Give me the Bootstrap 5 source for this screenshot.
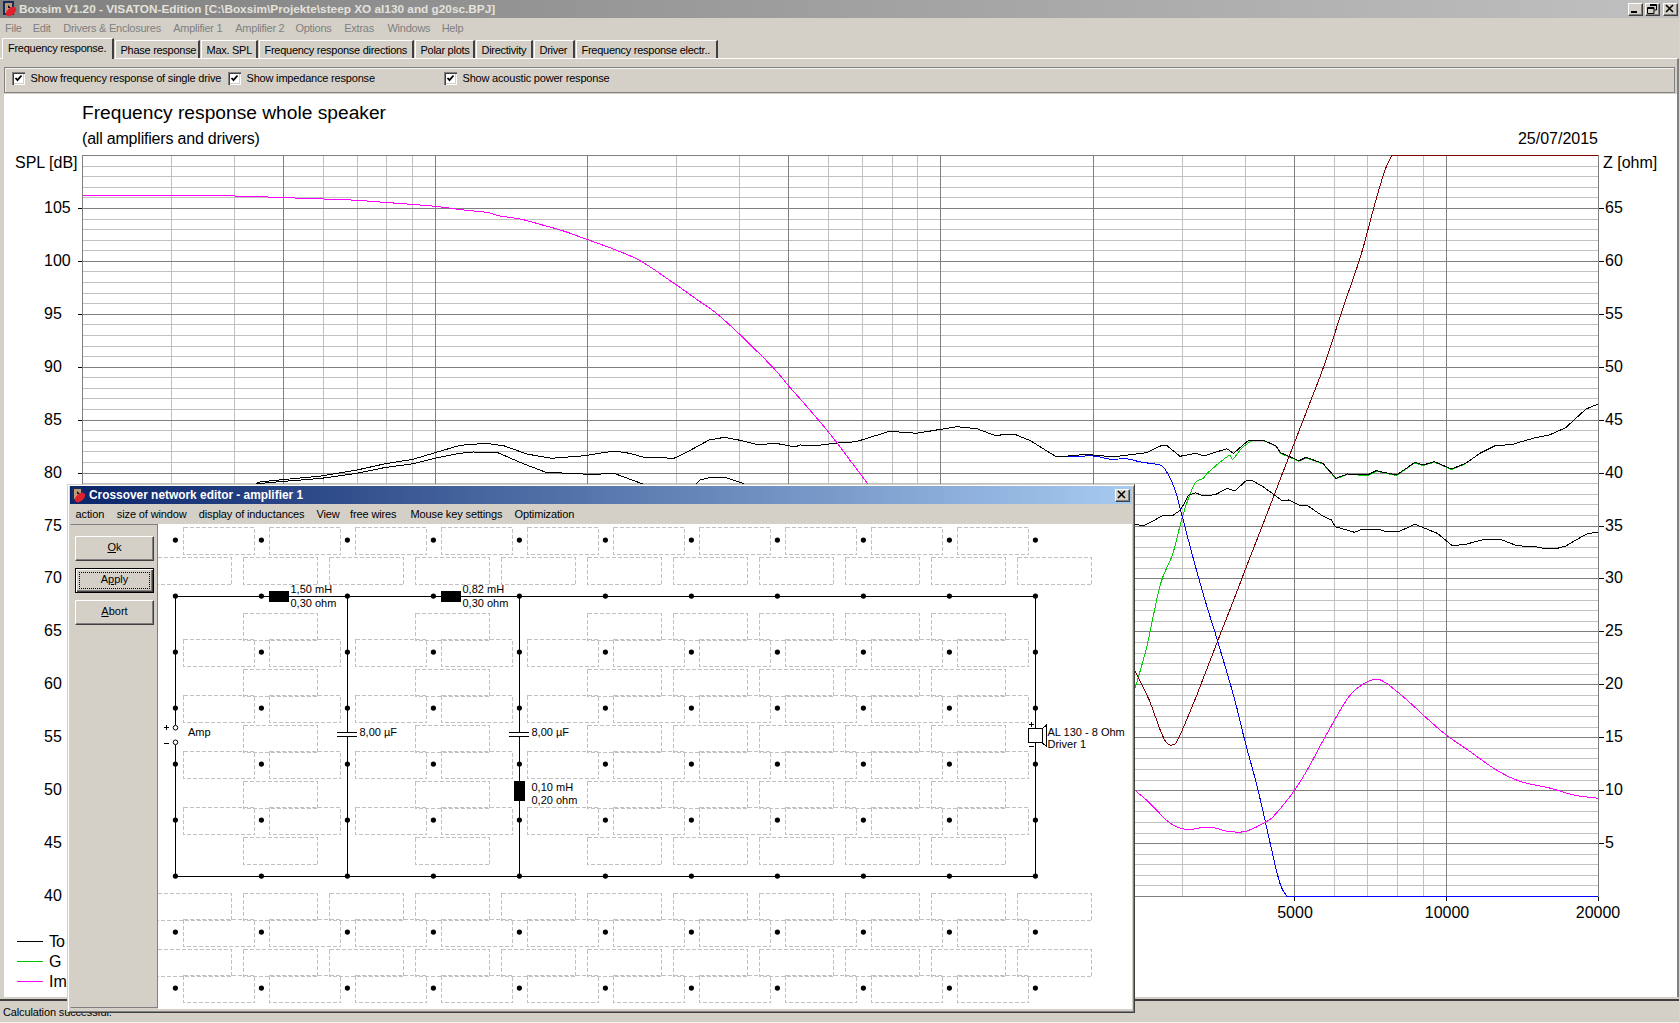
<!DOCTYPE html>
<html lang="en">
<head>
<meta charset="utf-8">
<title>Boxsim</title>
<link href="https://cdn.jsdelivr.net/npm/bootstrap@5.3.0/dist/css/bootstrap.min.css" rel="stylesheet">
<style>
html,body{width:1679px;height:1023px;overflow:hidden}
body{background:#d4d0c8;color:#000;font-family:"Liberation Sans",Arial,sans-serif;font-size:11px;line-height:13px;position:relative}
.app-title{height:18px;background:linear-gradient(90deg,#808080,#c0c0c0);color:#e4e2dc;font-weight:700;font-size:11.8px;padding-left:2px;flex:none}
.app-title svg{margin-right:1px;flex:none}
.cap-btn{width:15px;height:13px;background:#d4d0c8;border:1px solid;border-color:#fff #404040 #404040 #fff;box-shadow:inset -1px -1px #808080;display:flex;align-items:center;justify-content:center;padding:0;flex:none}
.app-caps{margin-right:1px}
.app-caps .cap-btn:nth-child(1){margin-right:2px}.app-caps .cap-btn:nth-child(2){margin-right:3px}
.app-menu{height:20px;padding-left:5px;color:#808080;flex:none;align-items:center;letter-spacing:-.25px}
.app-menu span:nth-child(1){width:27.7px}.app-menu span:nth-child(2){width:30.5px}.app-menu span:nth-child(3){width:110px}
.app-menu span:nth-child(4){width:62.1px}.app-menu span:nth-child(5){width:60.1px}.app-menu span:nth-child(6){width:48.9px}
.app-menu span:nth-child(7){width:43.2px}.app-menu span:nth-child(8){width:54.2px}
.app-tabs{height:20px;flex:none;padding-left:2px;position:relative;z-index:2;flex-wrap:nowrap;letter-spacing:-.27px}
.app-tabs .nav-item{height:18px;margin-top:2px;background:#d4d0c8;border-top:1px solid #fff;border-left:1px solid #fff;border-right:2px solid #404040;white-space:nowrap;padding:3px 0 0 4.500px;margin-right:1px;color:#000}
.app-tabs .nav-item.tab-on{height:21px;margin-top:0;padding:3px 0 0 5px;border-right-color:#404040}
.app-tabs .nav-item:nth-child(1){width:112px}.app-tabs .nav-item:nth-child(2){width:85px}.app-tabs .nav-item:nth-child(3){width:57px}
.app-tabs .nav-item:nth-child(4){width:155px}.app-tabs .nav-item:nth-child(5){width:60px}.app-tabs .nav-item:nth-child(6){width:57px}
.app-tabs .nav-item:nth-child(7){width:41px}.app-tabs .nav-item:nth-child(8){width:142px}
.app-page{border-top:1px solid #fff;border-right:2px solid #808080;padding:8px 0 0 4px;min-height:0;margin-top:0}
.app-opts{height:26px;margin-right:2px;margin-bottom:1px;border:1px solid #808080;box-shadow:inset 1px 1px #f4f3f0;flex:none;padding-left:8px}
.opt-check{display:flex;align-items:center;position:absolute;top:72px;margin:0;letter-spacing:-.19px}
.opt-a{left:12px}.opt-b{left:228px}.opt-c{left:444px}
.opt-check .form-check-input{width:13px;height:13px;margin:0 5.500px 0 0;border:0;border-radius:0;background-color:#fff;box-shadow:inset 1px 1px #808080,inset 2px 2px #404040,inset -1px -1px #fff,inset -2px -2px #d4d0c8;float:none;flex:none;opacity:1;background-size:9px 9px;background-position:center;background-image:url("data:image/svg+xml,%3csvg xmlns='http://www.w3.org/2000/svg' viewBox='0 0 9 9'%3e%3cpath d='M1.5 4l2 2.2L7.5 1.5' fill='none' stroke='%23000' stroke-width='1.8'/%3e%3c/svg%3e")}
.app-plot{background:#fff;min-height:0;flex:1 1 auto;overflow:hidden}
.app-plot svg{display:block}
.plot-t{font-family:"Liberation Sans",Arial,sans-serif;font-size:16px;fill:#000}
.plot-h{font-size:19.2px}
.plot-s{letter-spacing:-.2px}
.plot-l{letter-spacing:-.9px}
.app-status{flex:none;height:24px;margin-top:2px;border-top:2px solid #404040;border-bottom:1px solid #f4f3f0;padding:4px 0 0 3px;font-size:11px;line-height:15px;white-space:nowrap;letter-spacing:-.14px}
.xo-win{left:67px;top:484px;width:1068px;height:529px;background:#d4d0c8;border:1px solid;border-color:#d4d0c8 #404040 #404040 #d4d0c8;box-shadow:inset 1px 1px #fff,inset -1px -1px #808080;padding:1px 2px 3px;z-index:5}
.xo-title{height:18px;background:linear-gradient(90deg,#0a246a,#a6caf0);color:#fff;font-weight:700;font-size:11.9px;flex:none;padding-left:1px}
.xo-title svg{margin-right:2px}
.xo-title .cap-btn{margin-right:2px;margin-left:auto}
.xo-menu{height:20px;flex:none;padding-left:5.5px;align-items:center;letter-spacing:-.12px}
.xo-menu span:nth-child(1){width:41.3px}.xo-menu span:nth-child(2){width:82px}.xo-menu span:nth-child(3){width:117.7px}
.xo-menu span:nth-child(4){width:33.5px}.xo-menu span:nth-child(5){width:60.5px}.xo-menu span:nth-child(6){width:104px}
.xo-body{min-height:0;flex:1 1 auto}
.xo-side{width:88px;flex:none;border:1px solid;border-color:#808080 #808080 #808080 #d4d0c8;padding:11px 0 0 4px;gap:7px;height:484px}
.xo-btn.btn{width:79px;height:25px;padding:0 0 2px;background:#d4d0c8;color:#000;font-size:11px;line-height:13px;border:1px solid;border-color:#fff #404040 #404040 #fff;border-radius:0;box-shadow:inset -1px -1px #808080;display:flex;align-items:center;justify-content:center}
.xo-btn.btn.xo-def{border:1px solid #000;box-shadow:inset 1px 1px #fff,inset -1px -1px #404040,inset -2px -2px #808080;position:relative}
.xo-def::after{content:"";position:absolute;inset:3px;border:1px dotted #000}
.xo-canvas{flex:1 1 auto;background:#fff;min-width:0;overflow:hidden}
.xo-canvas svg{display:block}
.xo-t{font-family:"Liberation Sans",Arial,sans-serif;font-size:11px;fill:#000}
</style>
</head>
<body class="d-flex flex-column m-0">
<header class="app-title d-flex align-items-center">
<svg width="16" height="16" viewBox="0 0 16 16"><rect x="1" y="0" width="11" height="14" fill="#1a2a5a"/><rect x="3" y="2" width="7" height="10" fill="#b89a78"/><path d="M6 4l3 3H6z" fill="#111"/><ellipse cx="9" cy="10.5" rx="6" ry="3.6" transform="rotate(-40 9 10.5)" fill="#e0202c"/></svg>
<span class="flex-grow-1">Boxsim V1.20 - VISATON-Edition [C:\Boxsim\Projekte\steep XO al130 and g20sc.BPJ]</span>
<div class="app-caps d-flex">
<button class="cap-btn" aria-label="Minimize"><svg width="10" height="10" viewBox="0 0 10 10"><rect x="1" y="7" width="6" height="2"/></svg></button>
<button class="cap-btn" aria-label="Restore"><svg width="10" height="10" viewBox="0 0 10 10"><path d="M3 .5h6.5v5.5H7.5M.5 3.5h6.5v6H.5zM.5 4.5h6.5M3 1.5h6.5" fill="none" stroke="#000"/></svg></button>
<button class="cap-btn" aria-label="Close"><svg width="10" height="10" viewBox="0 0 10 10"><path d="M1 1l7 7M8 1L1 8" stroke="#000" stroke-width="1.6" fill="none"/></svg></button>
</div>
</header>
<nav class="app-menu d-flex"><span>File</span><span>Edit</span><span>Drivers &amp; Enclosures</span><span>Amplifier 1</span><span>Amplifier 2</span><span>Options</span><span>Extras</span><span>Windows</span><span>Help</span></nav>
<ul class="nav app-tabs m-0 list-unstyled">
<li class="nav-item tab-on">Frequency response.</li><li class="nav-item">Phase response</li><li class="nav-item">Max. SPL</li><li class="nav-item">Frequency response directions</li><li class="nav-item">Polar plots</li><li class="nav-item">Directivity</li><li class="nav-item">Driver</li><li class="nav-item">Frequency response electr..</li>
</ul>
<main class="app-page flex-grow-1 d-flex flex-column">
<div class="app-opts">
<label class="opt-check opt-a"><input class="form-check-input" type="checkbox" checked>Show frequency response of single drive</label>
<label class="opt-check opt-b"><input class="form-check-input" type="checkbox" checked>Show impedance response</label>
<label class="opt-check opt-c"><input class="form-check-input" type="checkbox" checked>Show acoustic power response</label>
</div>
<div class="app-plot">
<svg id="plot" width="1673" height="902" viewBox="4 94 1673 902">
<g id="grid" shape-rendering="crispEdges"></g>
<g id="curves" fill="none" stroke-width="1" shape-rendering="crispEdges"></g>
<g class="plot-t">
<text class="plot-t plot-h" x="82" y="119">Frequency response whole speaker</text>
<text class="plot-t plot-s" x="82" y="143.500">(all amplifiers and drivers)</text>
<text class="plot-t" x="1598" y="143.500" text-anchor="end">25/07/2015</text>
<text class="plot-t" x="15" y="168">SPL [dB]</text>
<text class="plot-t" x="1603" y="168">Z [ohm]</text>
<text class="plot-t" x="44" y="213">105</text><text class="plot-t" x="44" y="266">100</text><text class="plot-t" x="44" y="319">95</text><text class="plot-t" x="44" y="372">90</text><text class="plot-t" x="44" y="425">85</text><text class="plot-t" x="44" y="478">80</text><text class="plot-t" x="44" y="530.500">75</text><text class="plot-t" x="44" y="583">70</text><text class="plot-t" x="44" y="636">65</text><text class="plot-t" x="44" y="689">60</text><text class="plot-t" x="44" y="742">55</text><text class="plot-t" x="44" y="795">50</text><text class="plot-t" x="44" y="848">45</text><text class="plot-t" x="44" y="901">40</text>
<text class="plot-t" x="1605" y="213">65</text><text class="plot-t" x="1605" y="266">60</text><text class="plot-t" x="1605" y="319">55</text><text class="plot-t" x="1605" y="372">50</text><text class="plot-t" x="1605" y="425">45</text><text class="plot-t" x="1605" y="478">40</text><text class="plot-t" x="1605" y="530.500">35</text><text class="plot-t" x="1605" y="583">30</text><text class="plot-t" x="1605" y="636">25</text><text class="plot-t" x="1605" y="689">20</text><text class="plot-t" x="1605" y="742">15</text><text class="plot-t" x="1605" y="795">10</text><text class="plot-t" x="1605" y="848">5</text>
<g text-anchor="middle"><text class="plot-t" x="1295" y="917.500">5000</text><text class="plot-t" x="1447" y="917.500">10000</text><text class="plot-t" x="1598" y="917.500">20000</text></g>
<text class="plot-t plot-l" x="49" y="946.500">To</text><text class="plot-t" x="49" y="966.500">G</text><text class="plot-t" x="49" y="986.500">Impedance</text>
</g>
<g shape-rendering="crispEdges" stroke-width="1"><path d="M17 941.500H43" stroke="#000"/><path d="M17 961.500H43" stroke="#00c800"/><path d="M17 981.500H43" stroke="#f0f"/></g>
</svg>
</div>
</main>
<footer class="app-status">Calculation successful.</footer>

<section class="xo-win position-absolute d-flex flex-column">
<div class="xo-title d-flex align-items-center">
<svg width="16" height="16" viewBox="0 0 16 16"><rect x="1" y="0" width="11" height="14" fill="#1a2a5a"/><rect x="3" y="2" width="7" height="10" fill="#b89a78"/><path d="M6 4l3 3H6z" fill="#111"/><ellipse cx="9" cy="10.5" rx="6" ry="3.6" transform="rotate(-40 9 10.5)" fill="#e0202c"/></svg>
<span>Crossover network editor - amplifier 1</span>
<button class="cap-btn" aria-label="Close"><svg width="10" height="10" viewBox="0 0 10 10"><path d="M1 1l7 7M8 1L1 8" stroke="#000" stroke-width="1.6" fill="none"/></svg></button>
</div>
<nav class="xo-menu d-flex"><span>action</span><span>size of window</span><span>display of inductances</span><span>View</span><span>free wires</span><span>Mouse key settings</span><span>Optimization</span></nav>
<div class="xo-body d-flex">
<aside class="xo-side d-flex flex-column">
<button class="btn xo-btn"><span><u>O</u>k</span></button>
<button class="btn xo-btn xo-def"><span>A<u>p</u>ply</span></button>
<button class="btn xo-btn"><span><u>A</u>bort</span></button>
</aside>
<div class="xo-canvas">
<svg width="974" height="485" viewBox="158 524 974 485">
<g id="dash" fill="none" stroke="#c0c0c0" stroke-dasharray="4 2" shape-rendering="crispEdges"></g>
<g id="dots" fill="#000"></g>
<g stroke="#000" fill="none" stroke-width="1" shape-rendering="crispEdges">
<path d="M175.500 596.500H1035.500M175.500 876.500H1035.500"/>
<path d="M175.500 596.500V725M175.500 745V876.500M347.500 596.500V732M347.500 737V876.500M519.500 596.500V732M519.500 737V781M519.500 801V876.500M1035.500 596.500V728M1035.500 743V876.500"/>
<path d="M337 732.500H357M337 736.500H357M509 732.500H529M509 736.500H529"/>
<rect x="1028.500" y="728.500" width="14" height="14"/>
<path d="M1042.500 728.500L1046.500 725V746.500L1042.500 743"/>
<path d="M164 727.500h5M166.500 725v5M164 743.500h5M1029 724.500h5M1031.500 722v5M1029 746.500h5"/>
</g>
<g stroke="#000" fill="#fff" stroke-width="1"><circle cx="175.500" cy="727.700" r="2.300"/><circle cx="175.500" cy="742.300" r="2.300"/></g>
<g fill="#000"><rect x="269" y="591" width="20" height="11"/><rect x="441" y="591" width="20" height="11"/><rect x="514" y="781" width="11" height="20"/></g>
<text class="xo-t" x="290.500" y="592.500">1,50 mH</text><text class="xo-t" x="290.500" y="607">0,30 ohm</text>
<text class="xo-t" x="462.500" y="592.500">0,82 mH</text><text class="xo-t" x="462.500" y="607">0,30 ohm</text>
<text class="xo-t" x="359.500" y="735.500">8,00 µF</text><text class="xo-t" x="531.500" y="735.500">8,00 µF</text>
<text class="xo-t" x="531.500" y="791">0,10 mH</text><text class="xo-t" x="531.500" y="804">0,20 ohm</text>
<text class="xo-t" x="188" y="735.500">Amp</text>
<text class="xo-t" x="1047.500" y="735.500">AL 130 - 8 Ohm</text><text class="xo-t" x="1047.500" y="748">Driver 1</text>
</svg>
</div>
</div>
</section>

<script>
(function(){
var NS="http://www.w3.org/2000/svg";
function el(p,n,a){var e=document.createElementNS(NS,n);for(var k in a)e.setAttribute(k,a[k]);p.appendChild(e);return e;}
var g=document.getElementById('grid');
function X(f){return 82.6+1515.7*Math.log10(f/20)/3;}
function Y(db){return 155.5+(110-db)*10.586;}
function crisp(v){return Math.floor(v)+.5;}
var i;
for(i=40;i<=110;i++){if(i%5){var y=crisp(Y(i));el(g,'path',{d:'M82 '+y+'H1598',stroke:'#c0c0c0'});}}
var minors=[30,40,60,70,80,90,300,400,600,700,800,900,3000,4000,6000,7000,8000,9000];
minors.forEach(function(f){var x=crisp(X(f));el(g,'path',{d:'M'+x+' 155V897',stroke:'#c0c0c0'});});
[50,100,200,500,1000,2000,5000,10000].forEach(function(f){var x=crisp(X(f));el(g,'path',{d:'M'+x+' 155V897',stroke:'#808080'});});
for(i=40;i<=110;i+=5){var y2=crisp(Y(i));el(g,'path',{d:'M82 '+y2+'H1598',stroke:'#808080'});
 if(i<110){el(g,'path',{d:'M78 '+y2+'H82',stroke:'#000'});if(i>40)el(g,'path',{d:'M1598 '+y2+'H1604',stroke:'#000'});}}
el(g,'path',{d:'M82.500 155V897M1598.500 155V897',stroke:'#808080'});
[5000,10000,20000].forEach(function(f){var x=crisp(X(f));el(g,'path',{d:'M'+x+' 897V901',stroke:'#000'});});
var black1=[[256.7,482.3],[279,480],[321.4,476],[357,470],[384,464],[413,459.3],[435,452.7],[460,445.3],[486.6,443.3],[504.5,446],[526.8,454],[551.3,458.3],[584.8,455.7],[613.8,451],[629.5,453.3],[642.9,457],[674,458.3],[687.5,451.7],[700,445],[709,440],[724.6,437.3],[740,440.3],[758,444.7],[776,443.3],[794.6,447],[800.4,445],[813.8,446],[834,443.3],[856,441.7],[889.7,431.3],[916.5,433.3],[956.7,426.7],[976.8,428.7],[994.6,435.3],[1014.7,434.3],[1030.4,440.7],[1055,456],[1068,456],[1086,454.3],[1104,456],[1119.6,456],[1146.4,452.7],[1162,445.3],[1166.5,445.3],[1180,456.3],[1195.5,453.3],[1203.6,456],[1226.8,448.7],[1233.5,453.3],[1249,440],[1262.5,440],[1275.9,445.7],[1280.4,452.7],[1299,460.7],[1306,457.3],[1322.8,463.3],[1336,478.3],[1347.3,474],[1367.4,475],[1376.2,470.7],[1396.6,475],[1414.9,462.3],[1423,465],[1434.5,461.7],[1451.6,469],[1465.8,463.3],[1480,453.3],[1494.4,446],[1512.7,444.3],[1533,438.3],[1549.4,435],[1565.7,427.7],[1586,409],[1598.3,404]];
var black2a=[[200,490],[267.9,482.7],[321.4,478.3],[357,473.3],[384,467.7],[413,463.7],[435,458.3],[459.8,453.3],[473,452],[497.8,452.7],[522.3,463.3],[546.9,472.7],[575.9,473.3],[589.3,474.7],[613.8,473.3],[638.4,482.3],[660,490],[690,490],[700,480],[711,477.3],[724.6,477.3],[740,482.3],[760,490]];
var black2b=[[1134.5,524.3],[1144,525.7],[1152,521.7],[1162.2,515.7],[1172.4,515.7],[1180.6,510],[1188.7,495],[1195.7,492.7],[1203,496],[1215.2,494.7],[1227.4,488.3],[1234.8,491],[1245.8,481],[1252,480.3],[1264,487.3],[1282.5,501],[1288.6,500],[1300.8,506],[1307,505.3],[1321.2,515],[1331.4,520],[1335.4,526.7],[1354.6,532.3],[1362,529.3],[1378.2,529.3],[1386.4,531.7],[1398.6,531.7],[1414.9,524.3],[1437.3,533.3],[1452.4,545.7],[1465.8,544.3],[1484.2,539.3],[1500.5,539.3],[1516.8,545.7],[1535,546.7],[1543.3,548.3],[1557.5,548.3],[1565.7,546],[1586,534.3],[1597.5,532]];
var green=[[1134.5,690],[1146.8,646.7],[1160.2,585],[1172.4,555],[1180.6,523.3],[1186.7,503.3],[1194.9,483.3],[1203,478.3],[1209,471.7],[1228.3,456],[1232.7,459.3],[1241.7,448.3],[1252,441],[1264,441],[1276.4,446.7]];
var greenTail=black1.filter(function(p){return p[0]>1277&&p[0]<1467;}).map(function(p){return [p[0],p[1]+0.5];});
var blue=[[1055,456.5],[1068.3,456.7],[1092.9,456],[1110.7,459.3],[1126.3,458.7],[1142,462.3],[1159.8,465],[1166.5,471.7],[1174.5,488.3],[1180.6,510],[1192.8,556.7],[1205,600],[1217.3,640],[1234.8,700],[1243.8,736.7],[1258,790],[1270.2,843.3],[1276.3,870],[1281.2,886.7],[1287,896.5]];
var red=[[1134.5,670],[1149.2,700],[1160.2,730],[1166.3,742.3],[1172.4,745],[1178.6,738.3],[1194.8,700],[1203,679],[1217.3,642],[1235.6,595],[1247.8,563],[1264,521.5],[1278.4,484],[1294.7,442],[1311,400],[1325,363],[1343,308],[1361,255],[1374,207],[1385,170],[1392,155.5]];
var mag1=[[82.6,195.3],[196.4,195.3],[256.7,196.7],[294.6,198],[323.7,199],[357,200.3],[384,202.3],[410.7,204.3],[435,206.3],[464,210],[486.6,212.3],[500,216],[520,219],[540,224.3],[562.5,230.7],[585,238.7],[614,249.3],[640.6,261],[674,283.3],[700,301.7],[715.6,312.7],[739.3,334],[773.7,368.3],[789.3,386.7],[807,406.7],[829.5,433.3],[847.3,456.7],[867.4,483.3],[880,500]];
var mag2=[[1134.5,790],[1150,803.3],[1166.3,820],[1178.6,827.7],[1190.8,829.3],[1203,827.3],[1215.2,828],[1227.4,831.3],[1245.8,831.3],[1266.2,821.7],[1276.3,813.3],[1294.7,790],[1309,766.7],[1325.2,736.7],[1347.7,698.3],[1362,685],[1375,679.3],[1386.4,683.3],[1408.8,701.7],[1425,716.7],[1446.3,735],[1467.9,750],[1496.4,770],[1520.9,781.7],[1549.4,788],[1573.8,795],[1598.3,798.3]];
var c=document.getElementById('curves');
function spline(p){var o=[p[0]];for(var i=0;i<p.length-1;i++){var a=p[Math.max(i-1,0)],b=p[i],d=p[i+1],e=p[Math.min(i+2,p.length-1)];for(var s=1;s<=4;s++){var t=s/4,t2=t*t,t3=t2*t;o.push([0,1].map(function(k){return .5*(2*b[k]+(d[k]-a[k])*t+(2*a[k]-5*b[k]+4*d[k]-e[k])*t2+(3*b[k]-a[k]-3*d[k]+e[k])*t3);}));}}return o;}
function pl(pts,col){el(c,'polyline',{points:pts.map(function(p){return p[0].toFixed(1)+','+p[1].toFixed(1);}).join(' '),stroke:col});}
pl(spline(green).concat(greenTail),'#00d000');
pl(spline(blue).concat([[1598.3,896.5]]),'#0000ff');
pl(black1,'#000');pl(black2a,'#000');pl(black2b,'#000');
pl(spline(red).concat([[1598.3,155.5]]),'#800000');
pl(spline(mag1),'#ff00ff');pl(spline(mag2),'#ff00ff');
// crossover canvas
var xs=[],ys=[];for(i=0;i<=10;i++)xs.push(175.4+86*i);for(i=0;i<=8;i++)ys.push(540.1+56*i);
var d=document.getElementById('dash'),o=document.getElementById('dots');
[0,2,3,4,5,7,8].forEach(function(j){for(var k=0;k<10;k++){el(d,'rect',{x:Math.round(xs[k]+8)+.5,y:Math.round(ys[j]-13)+.5,width:71,height:27});}});
var gaps={0:[0,1,2,3,4,5,6,7,8,9,10],1:[1,3,5,6,7,8,9],2:[1,3,5,6,7,8,9],3:[1,3,5,6,7,8,9],4:[1,3,5,6,7,8,9],5:[1,3,5,6,7,8,9],6:[0,1,2,3,4,5,6,7,8,9,10],7:[0,1,2,3,4,5,6,7,8,9,10]};
Object.keys(gaps).forEach(function(j){gaps[j].forEach(function(k){el(d,'rect',{x:Math.round(xs[k]-18)+.5,y:Math.round(ys[j]+17)+.5,width:74,height:27});});});
ys.forEach(function(y){xs.forEach(function(x){el(o,'circle',{cx:x,cy:y,r:2.6});});});
})();
</script>
</body>
</html>
